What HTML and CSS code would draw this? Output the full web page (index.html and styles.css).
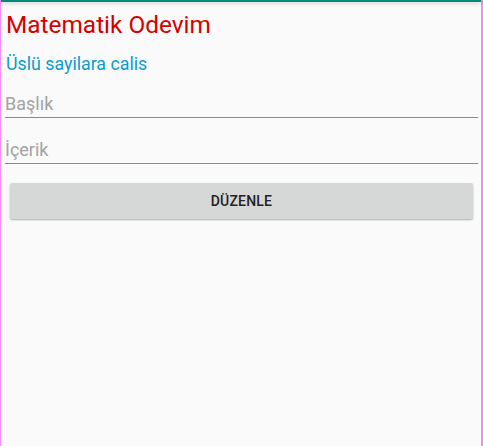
FILE: index.html
```html
<!DOCTYPE html>
<html lang="tr">
<head>
<meta charset="utf-8">
<title>Matematik Odevim</title>
<link rel="stylesheet" href="styles.css">
</head>
<body>
<div class="screen">
  <div class="appbar"></div>
  <main class="content">
    <h1 class="title">Matematik Odevim</h1>
    <p class="subtitle">Üslü sayilara calis</p>
    <div class="field field-first"><span class="hint">Başlık</span></div>
    <div class="field field-second"><span class="hint">İçerik</span></div>
    <button class="btn" type="button">DÜZENLE</button>
  </main>
</div>
</body>
</html>
```
FILE: styles.css
```css
html, body {
  margin: 0;
  padding: 0;
  height: 100%;
}
body {
  font-family: Roboto, "Noto Sans", "Liberation Sans", sans-serif;
  background: #fafafa;
}
.screen {
  box-sizing: border-box;
  height: 446px;
  border-left: 1px solid #f58ef5;
  border-right: 2px solid #f08cf0;
  background: #fafafa;
}
.appbar {
  height: 2px;
  background: #00897b;
  box-shadow: 0 1px 4px rgba(0, 0, 0, 0.25);
  position: relative;
}
.content {
  padding: 0 3px 0 4px;
}
.title {
  margin: 9px 0 0 1px;
  font-weight: 400;
  font-size: 24.4px;
  line-height: 28px;
  color: #d50000;
}
.subtitle {
  margin: 14px 0 0 1px;
  font-size: 17.8px;
  line-height: 22px;
  color: #0a9bd0;
}
.field {
  padding: 0 0 2px 0;
  border-bottom: 1px solid #8a8a8a;
}
.field-first { margin-top: 18px; }
.field-second { margin-top: 21px; }
.hint {
  display: block;
  font-size: 18px;
  line-height: 22px;
  color: #a3a3a3;
}
.btn {
  display: block;
  box-sizing: border-box;
  width: calc(100% - 10px);
  height: 36px;
  margin: 19px 5px 0 5px;
  border: none;
  border-radius: 2px;
  background: #d6d7d7;
  box-shadow: 0 1px 2px rgba(0, 0, 0, 0.3);
  font-family: Roboto, "Noto Sans", sans-serif;
  font-weight: 500;
  font-size: 14px;
  color: #222222;
  letter-spacing: 0.2px;
  padding: 0;
}
```
